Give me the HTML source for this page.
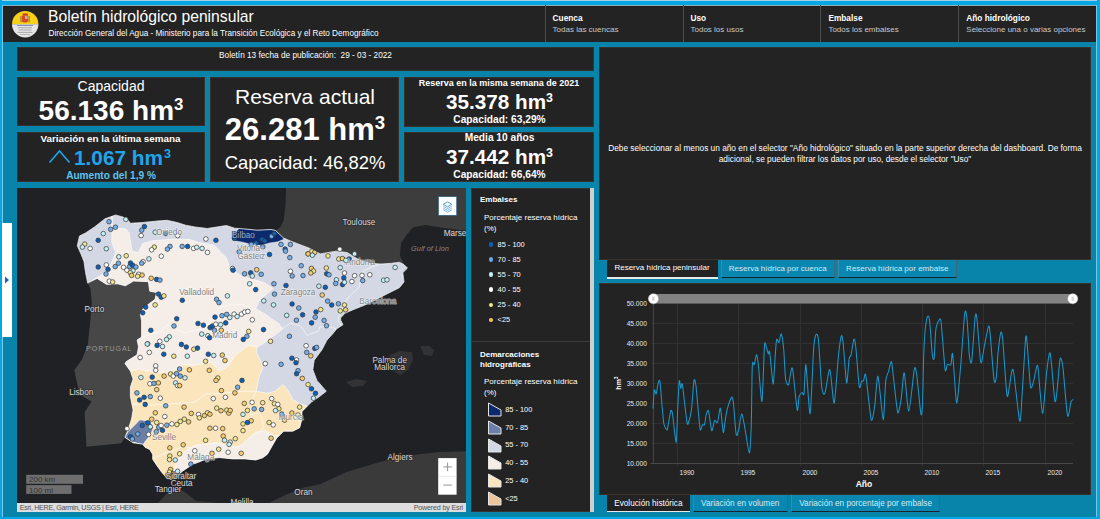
<!DOCTYPE html>
<html><head><meta charset="utf-8">
<style>
*{margin:0;padding:0;box-sizing:border-box}
html,body{width:1100px;height:519px;overflow:hidden;background:#0884ab;font-family:"Liberation Sans",sans-serif;color:#fff}
.abs{position:absolute}
.pan{position:absolute;background:#232323;box-shadow:inset 0 0 0 1px #3b312c}
.t{position:absolute;white-space:nowrap;line-height:1}
sup{font-size:60%;vertical-align:top;position:relative}
</style></head><body>
<div class="abs" style="left:0;top:0;width:1100px;height:5px;background:#04a6e4"></div>
<div class="abs" style="left:0;top:0;width:1100px;height:1px;background:#a6d2e3"></div>
<div class="abs" style="left:0;top:0;width:2px;height:519px;background:#04a6e4"></div>
<div class="abs" style="left:2px;top:5px;width:1px;height:514px;background:#7cc9e6"></div>
<div class="abs" style="left:1097px;top:0;width:3px;height:519px;background:#04a6e4"></div>
<div class="abs" style="left:1096px;top:5px;width:1px;height:514px;background:#7cc9e6"></div>
<div class="abs" style="left:0;top:517px;width:1100px;height:2px;background:#04a6e4"></div>
<div class="abs" style="left:3px;top:5px;width:1093px;height:37px;background:#232323;box-shadow:inset 0 1px 0 #8fb0bd, inset 0 2px 0 #231a16"></div>
<svg class="abs" style="left:11px;top:11px" width="28" height="28" viewBox="0 0 28 28">
<defs><clipPath id="lc"><circle cx="14.2" cy="13.2" r="13.2"/></clipPath></defs>
<g clip-path="url(#lc)"><rect x="0" y="0" width="28" height="13.2" fill="#f7d117"/><rect x="0" y="13.2" width="28" height="15" fill="#e6e6e6"/>
<rect x="11.5" y="2.4" width="5.5" height="2.2" rx="1" fill="#c0392b"/>
<path d="M10.8 4.5 H17.2 V9.5 Q17.2 11.6 14 11.6 Q10.8 11.6 10.8 9.5 Z" fill="#d9482b"/>
<rect x="14" y="5" width="2.6" height="3" fill="#c9a6b8"/>
<rect x="9.2" y="5" width="1.3" height="6.3" fill="#9a8a3a"/><rect x="17.5" y="5" width="1.3" height="6.3" fill="#9a8a3a"/>
<rect x="6" y="14" width="16" height="0.9" fill="#7a88a8"/><rect x="7" y="16.4" width="14" height="0.8" fill="#999"/><rect x="7.5" y="18.6" width="13" height="0.8" fill="#999"/><rect x="6.5" y="20.9" width="15" height="0.8" fill="#999"/><rect x="9" y="23" width="10" height="0.8" fill="#aaa"/></g>
</svg>
<div class="t" style="left:48px;top:9.4px;font-size:15.7px;color:#fff;font-weight:normal;">Boletín hidrológico peninsular</div>
<div class="t" style="left:48.6px;top:29.85px;font-size:8.2px;color:#fff;font-weight:normal;">Dirección General del Agua - Ministerio para la Transición Ecológica y el Reto Demográfico</div>
<div class="abs" style="left:544.6px;top:5px;width:1px;height:37px;background:#4d4d4d"></div>
<div class="t" style="left:552.6px;top:13.8px;font-size:8.3px;color:#fff;font-weight:bold;">Cuenca</div>
<div class="t" style="left:552.6px;top:26.2px;font-size:8.0px;color:#c8c8c8;font-weight:normal;">Todas las cuencas</div>
<div class="abs" style="left:682.5px;top:5px;width:1px;height:37px;background:#4d4d4d"></div>
<div class="t" style="left:690.5px;top:13.8px;font-size:8.3px;color:#fff;font-weight:bold;">Uso</div>
<div class="t" style="left:690.5px;top:26.2px;font-size:8.0px;color:#c8c8c8;font-weight:normal;">Todos los usos</div>
<div class="abs" style="left:820.4px;top:5px;width:1px;height:37px;background:#4d4d4d"></div>
<div class="t" style="left:828.4000000000001px;top:13.8px;font-size:8.3px;color:#fff;font-weight:bold;">Embalse</div>
<div class="t" style="left:828.4000000000001px;top:26.2px;font-size:8.0px;color:#c8c8c8;font-weight:normal;">Todos los embalses</div>
<div class="abs" style="left:958.3px;top:5px;width:1px;height:37px;background:#4d4d4d"></div>
<div class="t" style="left:966.3000000000001px;top:13.8px;font-size:8.3px;color:#fff;font-weight:bold;">Año hidrológico</div>
<div class="t" style="left:966.3000000000001px;top:26.2px;font-size:8.0px;color:#c8c8c8;font-weight:normal;">Seleccione una o varias opciones</div>
<div class="pan" style="left:17px;top:47px;width:577px;height:24px"></div>
<div class="t" style="left:305.5px;top:52.1px;font-size:8.25px;color:#fff;font-weight:normal;transform:translateX(-50%);">Boletín 13 fecha de publicación:&nbsp; 29 - 03 - 2022</div>
<div class="pan" style="left:17px;top:77px;width:188px;height:49px"></div>
<div class="pan" style="left:17px;top:132px;width:188px;height:50px"></div>
<div class="pan" style="left:210px;top:77px;width:189px;height:105px"></div>
<div class="pan" style="left:404px;top:77px;width:190px;height:50px"></div>
<div class="pan" style="left:404px;top:132px;width:190px;height:50px"></div>
<div class="t" style="left:111px;top:78.65px;font-size:14px;color:#fff;font-weight:normal;transform:translateX(-50%);">Capacidad</div>
<div class="t" style="left:111px;top:96.5px;font-size:28px;color:#fff;font-weight:bold;transform:translateX(-50%);">56.136 hm<sup>3</sup></div>
<div class="t" style="left:110.5px;top:133.8px;font-size:9.85px;color:#fff;font-weight:bold;transform:translateX(-50%);">Variación en la última semana</div>
<svg class="abs" style="left:48px;top:149px" width="24" height="15"><path d="M1.5 13.5 L11.5 2 L21.5 13.5" fill="none" stroke="#1ea5ec" stroke-width="1.6"/></svg>
<div class="t" style="left:74px;top:147.8px;font-size:20.8px;color:#1ea5ec;font-weight:bold;">1.067 hm<sup style="margin-left:1px">3</sup></div>
<div class="t" style="left:111px;top:170.6px;font-size:10.1px;color:#5cc3f0;font-weight:bold;transform:translateX(-50%);">Aumento del 1,9 %</div>
<div class="t" style="left:305px;top:85.5px;font-size:21px;color:#fff;font-weight:normal;transform:translateX(-50%);">Reserva actual</div>
<div class="t" style="left:305px;top:113.6px;font-size:31px;color:#fff;font-weight:bold;transform:translateX(-50%);">26.281 hm<sup>3</sup></div>
<div class="t" style="left:305px;top:153.5px;font-size:18.4px;color:#fff;font-weight:normal;transform:translateX(-50%);">Capacidad: 46,82%</div>
<div class="t" style="left:499px;top:78.9px;font-size:9px;color:#fff;font-weight:bold;transform:translateX(-50%);">Reserva en la misma semana de 2021</div>
<div class="t" style="left:499.5px;top:91.5px;font-size:20.7px;color:#fff;font-weight:bold;transform:translateX(-50%);">35.378 hm<sup>3</sup></div>
<div class="t" style="left:499.5px;top:114.7px;font-size:10.2px;color:#fff;font-weight:bold;transform:translateX(-50%);">Capacidad: 63,29%</div>
<div class="t" style="left:499.5px;top:133.2px;font-size:10.2px;color:#fff;font-weight:bold;transform:translateX(-50%);">Media 10 años</div>
<div class="t" style="left:499.5px;top:147.3px;font-size:20.7px;color:#fff;font-weight:bold;transform:translateX(-50%);">37.442 hm<sup>3</sup></div>
<div class="t" style="left:499.5px;top:170px;font-size:10.2px;color:#fff;font-weight:bold;transform:translateX(-50%);">Capacidad: 66,64%</div>
<div class="pan" style="left:599px;top:47px;width:492px;height:213px"></div>
<div class="t" style="left:845px;top:143.5px;font-size:8.3px;color:#fff;font-weight:normal;transform:translateX(-50%);">Debe seleccionar al menos un año en el selector "Año hidrológico" situado en la parte superior derecha del dashboard. De forma</div>
<div class="t" style="left:845px;top:155.3px;font-size:8.3px;color:#fff;font-weight:normal;transform:translateX(-50%);">adicional, se pueden filtrar los datos por uso, desde el selector "Uso"</div>
<div class="abs" style="left:607px;top:260px;width:111px;height:17px;background:#232323"></div>
<div class="abs" style="left:607px;top:277px;width:111px;height:1.5px;background:#e8e8e8"></div>
<div class="t" style="left:662px;top:264px;font-size:8.0px;color:#fff;font-weight:normal;transform:translateX(-50%);">Reserva hídrica peninsular</div>
<div class="abs" style="left:721px;top:260px;width:113.5px;height:18px;background:#0a87b0;border-right:1px solid #3d6a78;border-bottom:1.3px solid #1b2327;border-left:1px solid #3d8aa3"></div>
<div class="t" style="left:777.75px;top:264.8px;font-size:8.0px;color:#d3ebf2;font-weight:normal;transform:translateX(-50%);">Reserva hídrica por cuenca</div>
<div class="abs" style="left:837.5px;top:260px;width:119.5px;height:18px;background:#0a87b0;border-right:1px solid #3d6a78;border-bottom:1.3px solid #1b2327;border-left:1px solid #3d8aa3"></div>
<div class="t" style="left:897.25px;top:264.8px;font-size:8.0px;color:#d3ebf2;font-weight:normal;transform:translateX(-50%);">Reserva hídrica por embalse</div>
<div class="pan" style="left:599px;top:283px;width:492px;height:212px"></div>
<div class="abs" style="left:607px;top:495px;width:83px;height:15.5px;background:#232323"></div>
<div class="abs" style="left:607px;top:510.5px;width:83px;height:1.5px;background:#e8e8e8"></div>
<div class="t" style="left:648.4px;top:499.5px;font-size:8.2px;color:#fff;font-weight:normal;transform:translateX(-50%);">Evolución histórica</div>
<div class="abs" style="left:692.6px;top:495px;width:95.19999999999993px;height:17px;background:#0a87b0;border-right:1px solid #3d6a78;border-bottom:1.3px solid #1b2327;border-left:1px solid #3d8aa3"></div>
<div class="t" style="left:740.2px;top:500px;font-size:8.2px;color:#d3ebf2;font-weight:normal;transform:translateX(-50%);">Variación en volumen</div>
<div class="abs" style="left:790.8px;top:495px;width:149.70000000000005px;height:17px;background:#0a87b0;border-right:1px solid #3d6a78;border-bottom:1.3px solid #1b2327;border-left:1px solid #3d8aa3"></div>
<div class="t" style="left:865.65px;top:500px;font-size:8.2px;color:#d3ebf2;font-weight:normal;transform:translateX(-50%);">Variación en porcentaje por embalse</div>
<svg class="abs" style="left:599px;top:283px" width="492" height="212" viewBox="599 283 492 212"><line x1="650.5" y1="303.5" x2="1073" y2="303.5" stroke="#313131" stroke-width="1"/><text x="646.8" y="305.9" font-size="6.6" fill="#e8e8e8" text-anchor="end">50.000</text><line x1="650.5" y1="323.5" x2="1073" y2="323.5" stroke="#313131" stroke-width="1"/><text x="646.8" y="325.9" font-size="6.6" fill="#e8e8e8" text-anchor="end">45.000</text><line x1="650.5" y1="343.5" x2="1073" y2="343.5" stroke="#313131" stroke-width="1"/><text x="646.8" y="345.9" font-size="6.6" fill="#e8e8e8" text-anchor="end">40.000</text><line x1="650.5" y1="363.5" x2="1073" y2="363.5" stroke="#313131" stroke-width="1"/><text x="646.8" y="365.9" font-size="6.6" fill="#e8e8e8" text-anchor="end">35.000</text><line x1="650.5" y1="383.5" x2="1073" y2="383.5" stroke="#313131" stroke-width="1"/><text x="646.8" y="385.9" font-size="6.6" fill="#e8e8e8" text-anchor="end">30.000</text><line x1="650.5" y1="403.5" x2="1073" y2="403.5" stroke="#313131" stroke-width="1"/><text x="646.8" y="405.9" font-size="6.6" fill="#e8e8e8" text-anchor="end">25.000</text><line x1="650.5" y1="423.5" x2="1073" y2="423.5" stroke="#313131" stroke-width="1"/><text x="646.8" y="425.9" font-size="6.6" fill="#e8e8e8" text-anchor="end">20.000</text><line x1="650.5" y1="443.5" x2="1073" y2="443.5" stroke="#313131" stroke-width="1"/><text x="646.8" y="445.9" font-size="6.6" fill="#e8e8e8" text-anchor="end">15.000</text><line x1="650.5" y1="463.5" x2="1073" y2="463.5" stroke="#313131" stroke-width="1"/><text x="646.8" y="465.9" font-size="6.6" fill="#e8e8e8" text-anchor="end">10.000</text><line x1="677.5" y1="303" x2="677.5" y2="466" stroke="#313131" stroke-width="1"/><text x="686.9" y="475" font-size="6.7" fill="#e8e8e8" text-anchor="middle">1990</text><line x1="738.5" y1="303" x2="738.5" y2="466" stroke="#313131" stroke-width="1"/><text x="747.9" y="475" font-size="6.7" fill="#e8e8e8" text-anchor="middle">1995</text><line x1="800.5" y1="303" x2="800.5" y2="466" stroke="#313131" stroke-width="1"/><text x="809.9" y="475" font-size="6.7" fill="#e8e8e8" text-anchor="middle">2000</text><line x1="861.5" y1="303" x2="861.5" y2="466" stroke="#313131" stroke-width="1"/><text x="870.9" y="475" font-size="6.7" fill="#e8e8e8" text-anchor="middle">2005</text><line x1="922.5" y1="303" x2="922.5" y2="466" stroke="#313131" stroke-width="1"/><text x="931.9" y="475" font-size="6.7" fill="#e8e8e8" text-anchor="middle">2010</text><line x1="983.5" y1="303" x2="983.5" y2="466" stroke="#313131" stroke-width="1"/><text x="992.9" y="475" font-size="6.7" fill="#e8e8e8" text-anchor="middle">2015</text><line x1="1045.5" y1="303" x2="1045.5" y2="466" stroke="#313131" stroke-width="1"/><text x="1054.9" y="475" font-size="6.7" fill="#e8e8e8" text-anchor="middle">2020</text><line x1="653.4" y1="303" x2="653.4" y2="463.5" stroke="#484848" stroke-width="1"/><line x1="650.5" y1="463.5" x2="1073" y2="463.5" stroke="#484848" stroke-width="1"/><text x="864" y="487" font-size="8.5" font-weight="bold" fill="#fff" text-anchor="middle">Año</text><text transform="translate(620.6,383) rotate(-90)" font-size="7" font-weight="bold" fill="#fff" text-anchor="middle">hm<tspan dy="-3" font-size="5">3</tspan></text><rect x="653" y="294" width="420" height="9.5" fill="#828282"/><circle cx="653.4" cy="298.8" r="5" fill="#fff" stroke="#ccc" stroke-width="0.5"/><rect x="652.1" y="296.6" width="2.6" height="4.2" fill="#d6d6d6"/><circle cx="1072.8" cy="298.8" r="5" fill="#fff" stroke="#ccc" stroke-width="0.5"/><rect x="1071.5" y="296.6" width="2.6" height="4.2" fill="#d6d6d6"/><path d="M653.0,408.5 C653.2,406.3 653.9,391.8 654.3,390.0 C654.7,388.2 655.7,394.9 656.2,393.9 C656.7,392.9 658.0,383.0 658.5,381.6 C659.0,380.2 659.5,379.1 660.0,382.3 C660.5,385.5 661.8,403.5 662.3,408.5 C662.8,413.5 663.3,421.4 663.9,424.0 C664.5,426.6 666.4,430.1 667.0,430.0 C667.6,429.9 668.0,425.3 668.5,423.0 C669.0,420.7 670.3,411.9 670.8,410.8 C671.3,409.7 671.9,410.2 672.5,414.0 C673.1,417.8 675.6,443.1 676.2,442.4 C676.8,441.7 677.3,415.9 677.7,408.5 C678.1,401.1 678.9,383.2 679.3,380.8 C679.7,378.4 680.4,388.0 680.8,388.5 C681.2,389.0 681.7,380.5 682.4,384.6 C683.1,388.7 686.2,418.0 687.0,422.4 C687.8,426.8 688.4,422.7 689.0,421.0 C689.6,419.3 691.0,413.3 691.6,408.5 C692.2,403.7 693.4,383.5 693.9,380.8 C694.4,378.1 695.3,380.3 696.0,386.0 C696.7,391.7 699.2,424.0 700.0,428.6 C700.8,433.2 701.9,425.2 702.4,424.7 C702.9,424.2 704.0,425.9 704.5,424.7 C705.0,423.5 705.7,416.4 706.2,414.7 C706.7,413.0 707.8,408.9 708.5,410.8 C709.2,412.7 711.0,429.5 711.7,430.7 C712.4,431.9 713.9,421.5 714.6,420.5 C715.3,419.5 716.8,423.9 717.5,422.4 C718.2,420.9 719.7,407.0 720.4,408.2 C721.1,409.4 722.7,431.6 723.3,432.6 C723.9,433.6 725.2,419.5 725.8,416.2 C726.4,412.9 727.8,407.0 728.5,404.7 C729.2,402.4 731.4,397.1 732.0,397.0 C732.6,396.9 733.0,399.2 733.5,403.7 C734.0,408.2 735.6,431.4 736.2,434.5 C736.8,437.6 738.1,432.2 738.7,429.7 C739.3,427.2 740.9,414.4 741.6,413.9 C742.3,413.4 743.6,421.1 744.5,425.8 C745.4,430.5 748.5,452.7 749.3,452.9 C750.1,453.1 750.8,438.3 751.2,427.8 C751.6,417.3 751.9,373.2 752.3,365.6 C752.7,358.0 753.7,366.0 754.2,364.7 C754.7,363.4 756.2,354.2 756.7,354.7 C757.2,355.2 758.1,362.9 758.7,368.5 C759.3,374.1 761.3,404.1 762.0,401.3 C762.7,398.5 764.0,351.9 764.5,345.4 C765.0,338.9 765.9,346.3 766.4,347.3 C766.9,348.3 767.9,353.4 768.3,354.0 C768.7,354.6 769.1,348.6 769.7,352.2 C770.3,355.8 772.5,383.2 773.1,384.0 C773.7,384.8 774.6,364.2 775.0,358.9 C775.4,353.6 776.1,341.6 776.6,339.6 C777.1,337.6 778.3,343.2 778.9,342.5 C779.5,341.8 780.6,333.1 781.2,333.9 C781.8,334.7 783.2,343.9 783.7,349.3 C784.2,354.7 785.0,374.7 785.6,379.0 C786.2,383.3 787.9,385.7 788.5,384.9 C789.1,384.1 790.3,374.2 790.8,372.4 C791.3,370.6 791.9,365.0 792.7,369.5 C793.5,374.0 796.4,406.8 797.2,410.0 C798.0,413.2 798.5,398.6 799.1,396.5 C799.7,394.4 801.4,392.9 802.0,392.6 C802.6,392.3 803.5,396.9 804.0,393.6 C804.5,390.3 805.2,362.3 805.9,364.7 C806.6,367.1 809.2,415.6 810.1,413.8 C811.0,412.0 812.9,358.8 813.6,349.3 C814.3,339.8 815.3,336.0 815.9,334.8 C816.5,333.6 817.7,333.4 818.4,339.6 C819.1,345.8 820.9,380.3 821.7,386.8 C822.5,393.3 823.8,395.7 824.8,393.6 C825.8,391.5 828.7,368.3 829.8,369.5 C830.9,370.7 833.2,404.9 834.2,403.2 C835.2,401.5 837.6,363.1 838.5,355.0 C839.4,346.9 840.8,337.1 841.4,335.8 C842.0,334.5 842.7,338.8 843.3,344.5 C843.9,350.2 845.9,381.3 846.6,383.0 C847.3,384.7 848.6,362.3 849.1,358.9 C849.6,355.5 850.4,357.4 851.0,355.0 C851.6,352.6 853.3,340.1 853.9,339.2 C854.5,338.3 855.2,341.6 855.8,347.3 C856.4,353.0 858.6,382.8 859.3,386.8 C860.0,390.8 861.1,381.7 861.6,381.0 C862.1,380.3 863.0,381.7 863.5,381.0 C864.0,380.3 864.9,370.7 865.8,375.3 C866.7,379.9 870.1,415.9 871.2,419.6 C872.3,423.3 873.9,411.3 874.7,406.1 C875.5,400.9 877.0,374.6 878.0,376.2 C879.0,377.8 882.3,419.0 883.2,419.6 C884.1,420.2 885.1,386.8 885.7,381.0 C886.3,375.2 887.9,373.7 888.6,371.4 C889.3,369.1 890.8,360.1 891.5,361.8 C892.2,363.5 893.6,379.8 894.4,385.9 C895.2,392.0 897.0,411.3 897.8,412.9 C898.6,414.5 900.3,404.2 901.1,399.4 C901.9,394.6 903.3,371.4 904.2,372.8 C905.1,374.2 907.6,411.4 908.8,411.0 C910.0,410.6 913.4,373.8 914.3,369.4 C915.2,365.0 915.8,368.7 916.6,374.0 C917.4,379.3 920.1,409.4 920.8,413.3 C921.5,417.2 922.0,413.6 922.4,406.4 C922.8,399.2 923.4,362.6 923.8,353.2 C924.2,343.8 924.9,332.1 925.4,327.7 C925.9,323.3 927.2,317.0 927.7,316.2 C928.2,315.4 929.0,316.1 929.6,320.8 C930.2,325.5 931.8,351.1 932.4,355.5 C933.0,359.9 933.8,360.9 934.2,357.8 C934.6,354.7 935.2,334.6 935.8,330.0 C936.4,325.4 938.7,320.5 939.3,319.7 C939.9,318.9 940.5,317.1 941.2,323.1 C941.9,329.1 944.4,364.4 945.1,369.4 C945.8,374.4 946.7,365.3 947.4,364.7 C948.1,364.1 950.3,365.9 950.9,364.7 C951.5,363.5 952.0,349.7 952.7,354.3 C953.4,358.9 955.7,401.4 956.6,402.9 C957.5,404.4 959.6,377.7 960.6,367.0 C961.6,356.3 963.9,319.2 964.7,313.4 C965.5,307.6 966.4,313.4 967.0,318.5 C967.6,323.6 968.8,350.4 969.4,355.5 C970.0,360.6 971.0,365.9 971.7,361.3 C972.4,356.7 974.5,322.4 975.1,317.3 C975.7,312.2 976.2,313.1 976.9,318.5 C977.6,323.9 979.9,359.1 980.8,362.4 C981.7,365.7 983.4,350.6 984.3,346.3 C985.2,342.0 987.7,328.3 988.4,326.6 C989.1,324.9 989.3,326.0 990.0,332.4 C990.7,338.8 993.2,374.4 994.0,379.8 C994.8,385.2 995.8,380.8 996.3,377.5 C996.8,374.2 997.5,357.4 998.1,352.0 C998.7,346.6 1000.3,333.8 1000.9,332.4 C1001.5,331.0 1002.1,333.0 1002.8,340.5 C1003.5,348.0 1006.1,389.1 1006.9,394.8 C1007.7,400.5 1008.6,390.7 1009.2,387.8 C1009.8,384.9 1011.4,372.2 1012.0,370.5 C1012.6,368.8 1013.0,368.1 1013.9,374.0 C1014.8,379.9 1018.5,415.8 1019.4,420.0 C1020.3,424.2 1020.6,418.2 1021.3,408.7 C1022.0,399.2 1024.7,348.6 1025.4,340.5 C1026.1,332.4 1026.4,336.1 1027.0,341.6 C1027.6,347.1 1029.7,382.1 1030.5,386.7 C1031.3,391.3 1033.4,381.6 1034.0,379.8 C1034.6,378.0 1035.1,373.2 1035.6,371.7 C1036.1,370.2 1037.1,362.0 1037.9,367.0 C1038.7,372.0 1041.4,412.7 1042.5,413.3 C1043.6,413.9 1045.8,378.9 1046.7,371.7 C1047.6,364.5 1049.2,349.7 1050.2,353.2 C1051.2,356.7 1054.0,396.2 1054.8,400.6 C1055.6,405.0 1056.5,395.2 1057.1,390.2 C1057.7,385.2 1059.4,361.8 1060.1,359.0 C1060.8,356.2 1062.0,360.2 1062.9,367.0 C1063.8,373.8 1066.5,411.4 1067.5,415.6 C1068.5,419.8 1070.3,403.7 1071.0,401.8 C1071.7,399.9 1073.0,399.7 1073.3,399.4" fill="none" stroke="#1897cc" stroke-width="1.05" stroke-linejoin="round"/></svg>
<div class="abs" style="left:17px;top:188px;width:449px;height:324px;background:#202124;overflow:hidden"><svg width="449" height="324" viewBox="17 188 449 324" style="position:absolute;left:0;top:0"><defs><clipPath id="sp"><polygon points="77.3,245.8 79.5,236.0 85.5,233.0 94.5,227.0 105.0,218.8 115.6,215.0 126.1,218.0 130.6,223.3 142.7,222.5 157.7,221.0 167.0,220.3 177.0,222.5 185.5,225.2 195.0,227.0 207.3,228.5 217.0,227.0 226.4,225.5 234.5,228.2 243.9,228.9 257.4,230.2 270.9,229.5 275.4,230.4 283.7,238.1 292.1,241.7 301.6,245.3 310.0,248.5 320.2,253.9 336.4,251.2 347.2,252.5 358.0,259.3 370.1,263.3 380.9,264.0 391.7,263.3 399.4,262.3 404.0,264.6 407.5,268.1 402.8,272.7 404.0,282.0 399.4,287.7 387.8,293.5 376.2,299.3 364.7,305.1 353.1,309.7 345.0,313.2 340.5,318.0 340.8,320.4 343.0,324.7 336.6,328.9 332.4,334.2 327.0,340.0 321.8,350.0 314.2,360.2 312.8,369.7 316.9,380.4 326.3,391.2 319.5,396.6 311.5,402.0 307.4,406.0 302.0,411.6 301.5,420.8 299.7,427.7 292.8,431.2 283.6,431.2 276.6,438.2 272.0,446.2 267.4,454.3 262.7,457.8 255.8,460.0 245.0,458.9 232.9,458.9 219.4,457.6 205.9,458.9 198.9,462.1 193.1,464.1 187.3,467.9 181.6,471.8 176.8,477.5 171.0,479.5 166.2,477.5 161.4,471.8 156.5,465.0 152.7,459.2 152.7,454.4 149.8,449.6 145.0,447.2 142.5,444.1 133.1,442.8 125.0,437.4 128.0,430.0 131.6,418.9 133.1,410.0 130.4,396.6 130.4,387.2 133.1,379.1 130.4,371.0 125.0,363.6 126.3,361.6 137.1,354.8 138.5,346.7 137.1,340.0 141.6,337.0 141.6,320.8 140.3,314.1 143.0,308.7 149.7,303.3 155.1,299.3 156.5,292.5 149.7,291.2 148.4,281.7 133.5,281.1 125.4,285.8 117.4,283.8 106.6,284.4 97.1,278.4 87.7,283.1 87.0,279.7 85.5,272.2 84.0,261.6 81.0,254.1"/></clipPath></defs><rect x="17" y="188" width="449" height="324" fill="#202124"/><polygon points="286.1,186.0 470.0,186.0 470.0,231.0 460.0,230.0 440.5,227.6 425.4,225.0 412.9,227.6 406.5,235.0 401.1,243.1 399.8,255.2 404.0,264.6 399.4,262.3 391.7,263.3 380.9,264.0 370.1,263.3 358.0,259.3 347.2,252.5 336.4,251.2 320.2,253.9 310.0,248.5 301.6,245.3 292.1,241.7 283.7,238.1 275.4,230.4 280.1,227.4 283.7,220.2 285.5,205.9" fill="#3d3d3e"/><polygon points="150.0,520.0 158.0,503.0 167.8,492.4 177.6,487.5 187.5,494.0 196.0,501.0 230.0,504.0 265.0,505.0 287.3,494.0 303.7,487.5 320.0,484.2 346.4,472.0 381.5,461.5 416.6,454.5 440.0,452.0 470.0,451.0 470.0,520.0" fill="#3a3a3b"/><polygon points="87.7,283.1 97.1,278.4 106.6,284.4 117.4,283.8 125.4,285.8 133.5,281.1 148.4,281.7 149.7,291.2 156.5,292.5 155.1,299.3 149.7,303.3 143.0,308.7 140.3,314.1 141.6,320.8 141.6,337.0 137.1,340.0 138.5,346.7 137.1,354.8 126.3,361.6 125.0,363.6 130.4,371.0 133.1,379.1 130.4,387.2 130.4,396.6 133.1,410.0 131.6,418.9 128.0,430.0 125.0,437.4 121.2,443.2 86.4,446.7 84.7,412.0 91.6,401.5 79.5,394.6 74.3,370.3 81.7,360.0 87.7,345.0 90.4,320.8 91.7,302.0 90.4,288.5" fill="#474747"/><polygon points="390.0,355.0 400.0,351.0 412.0,352.0 413.0,360.0 408.0,370.0 400.0,375.6 392.0,370.0 388.5,362.0" fill="#333335"/><polygon points="420.0,346.0 429.0,345.8 434.0,350.0 432.0,356.0 424.0,355.0" fill="#333335"/><polygon points="346.0,382.0 356.0,379.0 367.0,381.0 363.0,386.0 352.0,387.0" fill="#333335"/><g clip-path="url(#sp)"><polygon points="77.3,245.8 79.5,236.0 85.5,233.0 94.5,227.0 105.0,218.8 115.6,215.0 126.1,218.0 130.6,223.3 142.7,222.5 157.7,221.0 167.0,220.3 177.0,222.5 185.5,225.2 195.0,227.0 207.3,228.5 217.0,227.0 226.4,225.5 234.5,228.2 243.9,228.9 257.4,230.2 270.9,229.5 275.4,230.4 283.7,238.1 292.1,241.7 301.6,245.3 310.0,248.5 320.2,253.9 336.4,251.2 347.2,252.5 358.0,259.3 370.1,263.3 380.9,264.0 391.7,263.3 399.4,262.3 404.0,264.6 407.5,268.1 402.8,272.7 404.0,282.0 399.4,287.7 387.8,293.5 376.2,299.3 364.7,305.1 353.1,309.7 345.0,313.2 340.5,318.0 340.8,320.4 343.0,324.7 336.6,328.9 332.4,334.2 327.0,340.0 321.8,350.0 314.2,360.2 312.8,369.7 316.9,380.4 326.3,391.2 319.5,396.6 311.5,402.0 307.4,406.0 302.0,411.6 301.5,420.8 299.7,427.7 292.8,431.2 283.6,431.2 276.6,438.2 272.0,446.2 267.4,454.3 262.7,457.8 255.8,460.0 245.0,458.9 232.9,458.9 219.4,457.6 205.9,458.9 198.9,462.1 193.1,464.1 187.3,467.9 181.6,471.8 176.8,477.5 171.0,479.5 166.2,477.5 161.4,471.8 156.5,465.0 152.7,459.2 152.7,454.4 149.8,449.6 145.0,447.2 142.5,444.1 133.1,442.8 125.0,437.4 128.0,430.0 131.6,418.9 133.1,410.0 130.4,396.6 130.4,387.2 133.1,379.1 130.4,371.0 125.0,363.6 126.3,361.6 137.1,354.8 138.5,346.7 137.1,340.0 141.6,337.0 141.6,320.8 140.3,314.1 143.0,308.7 149.7,303.3 155.1,299.3 156.5,292.5 149.7,291.2 148.4,281.7 133.5,281.1 125.4,285.8 117.4,283.8 106.6,284.4 97.1,278.4 87.7,283.1 87.0,279.7 85.5,272.2 84.0,261.6 81.0,254.1" fill="#d3d8e4"/><polygon points="112.1,215.0 112.1,229.5 118.0,228.0 126.0,229.0 129.1,233.0 132.1,251.1 138.2,252.6 142.7,243.6 153.2,240.6 175.0,239.0 190.0,239.6 198.1,242.3 206.2,243.7 214.3,245.0 221.0,252.4 226.4,257.8 229.1,265.9 234.5,271.3 242.6,276.7 256.0,280.0 265.1,283.1 273.2,288.5 265.1,295.2 258.4,302.0 255.7,308.7 265.1,314.1 270.5,318.1 278.6,323.5 282.6,328.9 275.9,334.3 270.5,338.4 261.1,345.0 257.5,346.7 248.1,345.4 245.0,348.1 235.6,354.8 227.5,367.0 219.4,371.0 211.3,362.2 200.5,364.3 192.4,365.6 183.0,364.3 176.2,369.0 165.4,372.4 154.7,372.4 138.5,369.0 130.4,371.0 125.0,363.6 110.0,363.0 110.0,290.0 88.5,290.0 88.5,284.2 93.0,280.0 100.0,276.0 107.0,270.0 112.0,262.0 115.6,252.6 111.8,242.0" fill="#f4ede8" stroke="#fff" stroke-width="0.8" stroke-opacity="0.75"/><polygon points="125.0,363.6 130.4,371.0 138.5,369.0 154.7,372.4 165.4,372.4 176.2,369.0 183.0,364.3 192.4,365.6 200.5,364.3 211.3,362.2 219.4,371.0 227.5,367.0 235.6,354.8 245.0,348.1 248.1,345.4 257.5,346.7 256.2,352.1 260.2,360.2 262.9,367.0 258.9,377.8 256.2,391.2 267.0,393.3 275.1,391.2 283.1,384.5 288.5,391.2 292.6,399.3 299.3,403.4 307.4,406.1 315.0,406.0 310.0,440.0 274.3,435.8 269.7,433.5 265.1,430.6 255.8,432.4 248.9,438.2 241.9,445.1 235.0,447.4 227.5,445.4 216.7,442.8 205.9,444.1 195.1,445.4 185.7,450.8 176.2,461.6 173.9,476.6 170.0,490.0 120.0,490.0 110.0,363.0" fill="#fbe5bd" stroke="#fff" stroke-width="0.8" stroke-opacity="0.75"/><polygon points="173.9,476.6 176.2,461.6 185.7,450.8 195.1,445.4 205.9,444.1 216.7,442.8 227.5,445.4 235.0,447.4 241.9,445.1 248.9,438.2 255.8,432.4 265.1,430.6 269.7,433.5 274.3,435.8 285.0,436.0 280.0,470.0 175.0,490.0" fill="#f4ede8" stroke="#fff" stroke-width="0.8" stroke-opacity="0.75"/><polygon points="232.4,238.1 241.9,224.0 253.9,224.0 265.8,228.0 273.0,226.0 282.5,230.0 283.7,239.3 277.8,241.7 269.4,242.9 261.0,245.3 250.3,244.1 240.7,241.7 232.4,240.5" fill="#0b2a6e" stroke="#fff" stroke-width="0.6" stroke-opacity="0.6"/><polygon points="127.7,432.0 135.8,423.9 139.8,419.8 150.6,421.2 153.3,427.9 150.6,434.7 145.2,441.4 142.5,445.4 135.8,442.8 129.0,440.7 124.0,438.0" fill="#6b80a8" stroke="#fff" stroke-width="0.6"/><polyline points="141.6,337.0 160.5,331.6 167.2,324.9 184.8,333.0 192.9,330.3 205.0,328.9 212.0,318.0 219.3,307.4 232.8,304.0 242.2,304.7 255.7,308.7" fill="none" stroke="#fff" stroke-width="0.8" stroke-opacity="0.75"/><polyline points="282.6,328.9 290.0,323.1 300.6,325.7 306.9,335.3 318.6,331.0 319.7,326.8 332.4,327.3 336.6,328.9" fill="none" stroke="#fff" stroke-width="0.8" stroke-opacity="0.75"/><polyline points="378.6,264.6 363.5,270.4 361.2,278.5 358.9,287.7 350.8,294.7 346.2,300.5 342.7,308.6 339.2,315.5 337.7,320.4 341.9,325.7" fill="none" stroke="#fff" stroke-width="0.8" stroke-opacity="0.75"/><polyline points="131.0,404.0 150.0,405.0 178.9,403.4 195.1,402.0 205.9,393.9 216.7,393.9 227.5,392.6 245.0,391.2 256.2,391.2" fill="none" stroke="#fff" stroke-width="0.8" stroke-opacity="0.75"/><polyline points="256.2,391.2 252.0,400.0 250.0,415.0 259.9,412.7 262.7,420.8 263.3,427.7 260.4,431.0" fill="none" stroke="#fff" stroke-width="0.8" stroke-opacity="0.75"/><polyline points="152.7,458.3 164.2,453.5 176.2,449.5 183.5,446.0 190.0,448.0" fill="none" stroke="#fff" stroke-width="0.8" stroke-opacity="0.75"/></g><polygon points="77.3,245.8 79.5,236.0 85.5,233.0 94.5,227.0 105.0,218.8 115.6,215.0 126.1,218.0 130.6,223.3 142.7,222.5 157.7,221.0 167.0,220.3 177.0,222.5 185.5,225.2 195.0,227.0 207.3,228.5 217.0,227.0 226.4,225.5 234.5,228.2 243.9,228.9 257.4,230.2 270.9,229.5 275.4,230.4 283.7,238.1 292.1,241.7 301.6,245.3 310.0,248.5 320.2,253.9 336.4,251.2 347.2,252.5 358.0,259.3 370.1,263.3 380.9,264.0 391.7,263.3 399.4,262.3 404.0,264.6 407.5,268.1 402.8,272.7 404.0,282.0 399.4,287.7 387.8,293.5 376.2,299.3 364.7,305.1 353.1,309.7 345.0,313.2 340.5,318.0 340.8,320.4 343.0,324.7 336.6,328.9 332.4,334.2 327.0,340.0 321.8,350.0 314.2,360.2 312.8,369.7 316.9,380.4 326.3,391.2 319.5,396.6 311.5,402.0 307.4,406.0 302.0,411.6 301.5,420.8 299.7,427.7 292.8,431.2 283.6,431.2 276.6,438.2 272.0,446.2 267.4,454.3 262.7,457.8 255.8,460.0 245.0,458.9 232.9,458.9 219.4,457.6 205.9,458.9 198.9,462.1 193.1,464.1 187.3,467.9 181.6,471.8 176.8,477.5 171.0,479.5 166.2,477.5 161.4,471.8 156.5,465.0 152.7,459.2 152.7,454.4 149.8,449.6 145.0,447.2 142.5,444.1 133.1,442.8 125.0,437.4 128.0,430.0 131.6,418.9 133.1,410.0 130.4,396.6 130.4,387.2 133.1,379.1 130.4,371.0 125.0,363.6 126.3,361.6 137.1,354.8 138.5,346.7 137.1,340.0 141.6,337.0 141.6,320.8 140.3,314.1 143.0,308.7 149.7,303.3 155.1,299.3 156.5,292.5 149.7,291.2 148.4,281.7 133.5,281.1 125.4,285.8 117.4,283.8 106.6,284.4 97.1,278.4 87.7,283.1 87.0,279.7 85.5,272.2 84.0,261.6 81.0,254.1" fill="none" stroke="#fff" stroke-width="0.9" stroke-opacity="0.85"/><circle cx="109.0" cy="221.7" r="2.3" fill="#72aeea" stroke="#333" stroke-width="0.7"/><circle cx="125.8" cy="219.4" r="2.3" fill="#bff0f6" stroke="#333" stroke-width="0.7"/><circle cx="110.7" cy="229.3" r="2.3" fill="#72aeea" stroke="#333" stroke-width="0.7"/><circle cx="115.4" cy="227.2" r="2.3" fill="#72aeea" stroke="#333" stroke-width="0.7"/><circle cx="103.3" cy="233.6" r="2.3" fill="#bff0f6" stroke="#333" stroke-width="0.7"/><circle cx="98.2" cy="240.3" r="2.3" fill="#0b5fb8" stroke="#333" stroke-width="0.7"/><circle cx="84.7" cy="244.1" r="2.3" fill="#f1e68c" stroke="#333" stroke-width="0.7"/><circle cx="82.4" cy="247.1" r="2.3" fill="#bff0f6" stroke="#333" stroke-width="0.7"/><circle cx="90.1" cy="248.4" r="2.3" fill="#ffffff" stroke="#333" stroke-width="0.7"/><circle cx="106.3" cy="248.7" r="2.3" fill="#bff0f6" stroke="#333" stroke-width="0.7"/><circle cx="144.4" cy="226.6" r="2.3" fill="#0b5fb8" stroke="#333" stroke-width="0.7"/><circle cx="141.7" cy="230.2" r="2.3" fill="#72aeea" stroke="#333" stroke-width="0.7"/><circle cx="141.1" cy="235.6" r="2.3" fill="#ffffff" stroke="#333" stroke-width="0.7"/><circle cx="155.2" cy="232.2" r="2.3" fill="#bff0f6" stroke="#333" stroke-width="0.7"/><circle cx="165.6" cy="233.6" r="2.3" fill="#0b5fb8" stroke="#333" stroke-width="0.7"/><circle cx="177.7" cy="235.6" r="2.3" fill="#ffffff" stroke="#333" stroke-width="0.7"/><circle cx="154.3" cy="247.1" r="2.3" fill="#f1e68c" stroke="#333" stroke-width="0.7"/><circle cx="151.6" cy="249.8" r="2.3" fill="#ffffff" stroke="#333" stroke-width="0.7"/><circle cx="170.0" cy="246.4" r="2.3" fill="#72aeea" stroke="#333" stroke-width="0.7"/><circle cx="167.4" cy="249.1" r="2.3" fill="#72aeea" stroke="#333" stroke-width="0.7"/><circle cx="182.2" cy="246.4" r="2.3" fill="#72aeea" stroke="#333" stroke-width="0.7"/><circle cx="187.6" cy="246.4" r="2.3" fill="#0b5fb8" stroke="#333" stroke-width="0.7"/><circle cx="193.6" cy="248.4" r="2.3" fill="#ffffff" stroke="#333" stroke-width="0.7"/><circle cx="161.3" cy="256.2" r="2.3" fill="#ffffff" stroke="#333" stroke-width="0.7"/><circle cx="148.9" cy="258.9" r="2.3" fill="#bff0f6" stroke="#333" stroke-width="0.7"/><circle cx="143.1" cy="261.6" r="2.3" fill="#ffffff" stroke="#333" stroke-width="0.7"/><circle cx="141.7" cy="263.2" r="2.3" fill="#72aeea" stroke="#333" stroke-width="0.7"/><circle cx="126.2" cy="255.8" r="2.3" fill="#f1e68c" stroke="#333" stroke-width="0.7"/><circle cx="118.8" cy="256.8" r="2.3" fill="#bff0f6" stroke="#333" stroke-width="0.7"/><circle cx="118.4" cy="263.2" r="2.3" fill="#72aeea" stroke="#333" stroke-width="0.7"/><circle cx="115.2" cy="266.6" r="2.3" fill="#72aeea" stroke="#333" stroke-width="0.7"/><circle cx="106.3" cy="264.9" r="2.3" fill="#ffffff" stroke="#333" stroke-width="0.7"/><circle cx="98.2" cy="267.0" r="2.3" fill="#0b5fb8" stroke="#333" stroke-width="0.7"/><circle cx="108.0" cy="269.3" r="2.3" fill="#0b5fb8" stroke="#333" stroke-width="0.7"/><circle cx="106.0" cy="274.0" r="2.3" fill="#72aeea" stroke="#333" stroke-width="0.7"/><circle cx="123.5" cy="267.3" r="2.3" fill="#ffffff" stroke="#333" stroke-width="0.7"/><circle cx="126.9" cy="270.2" r="2.3" fill="#ffffff" stroke="#333" stroke-width="0.7"/><circle cx="129.6" cy="266.6" r="2.3" fill="#72aeea" stroke="#333" stroke-width="0.7"/><circle cx="130.5" cy="263.0" r="2.3" fill="#0b5fb8" stroke="#333" stroke-width="0.7"/><circle cx="132.7" cy="265.3" r="2.3" fill="#0b5fb8" stroke="#333" stroke-width="0.7"/><circle cx="135.9" cy="267.0" r="2.3" fill="#72aeea" stroke="#333" stroke-width="0.7"/><circle cx="133.0" cy="270.7" r="2.3" fill="#bff0f6" stroke="#333" stroke-width="0.7"/><circle cx="130.3" cy="272.7" r="2.3" fill="#f1e68c" stroke="#333" stroke-width="0.7"/><circle cx="131.6" cy="275.4" r="2.3" fill="#f3cc70" stroke="#333" stroke-width="0.7"/><circle cx="138.6" cy="274.3" r="2.3" fill="#ffffff" stroke="#333" stroke-width="0.7"/><circle cx="142.1" cy="275.1" r="2.3" fill="#f3cc70" stroke="#333" stroke-width="0.7"/><circle cx="151.2" cy="278.3" r="2.3" fill="#f3cc70" stroke="#333" stroke-width="0.7"/><circle cx="156.6" cy="279.4" r="2.3" fill="#0b5fb8" stroke="#333" stroke-width="0.7"/><circle cx="160.0" cy="280.1" r="2.3" fill="#72aeea" stroke="#333" stroke-width="0.7"/><circle cx="205.9" cy="239.0" r="2.3" fill="#ffffff" stroke="#333" stroke-width="0.7"/><circle cx="215.9" cy="240.3" r="2.3" fill="#0b5fb8" stroke="#333" stroke-width="0.7"/><circle cx="196.7" cy="247.3" r="2.3" fill="#bff0f6" stroke="#333" stroke-width="0.7"/><circle cx="202.1" cy="248.4" r="2.3" fill="#bff0f6" stroke="#333" stroke-width="0.7"/><circle cx="207.5" cy="252.4" r="2.3" fill="#ffffff" stroke="#333" stroke-width="0.7"/><circle cx="234.5" cy="238.3" r="2.3" fill="#0b5fb8" stroke="#333" stroke-width="0.7"/><circle cx="251.3" cy="244.4" r="2.3" fill="#72aeea" stroke="#333" stroke-width="0.7"/><circle cx="256.1" cy="243.0" r="2.3" fill="#0b5fb8" stroke="#333" stroke-width="0.7"/><circle cx="262.1" cy="239.6" r="2.3" fill="#0b5fb8" stroke="#333" stroke-width="0.7"/><circle cx="264.8" cy="241.0" r="2.3" fill="#0b5fb8" stroke="#333" stroke-width="0.7"/><circle cx="262.8" cy="246.8" r="2.3" fill="#72aeea" stroke="#333" stroke-width="0.7"/><circle cx="271.6" cy="236.3" r="2.3" fill="#72aeea" stroke="#333" stroke-width="0.7"/><circle cx="274.3" cy="233.8" r="2.3" fill="#0b5fb8" stroke="#333" stroke-width="0.7"/><circle cx="281.0" cy="244.4" r="2.3" fill="#72aeea" stroke="#333" stroke-width="0.7"/><circle cx="290.4" cy="244.4" r="2.3" fill="#72aeea" stroke="#333" stroke-width="0.7"/><circle cx="285.1" cy="249.1" r="2.3" fill="#0b5fb8" stroke="#333" stroke-width="0.7"/><circle cx="285.5" cy="251.1" r="2.3" fill="#72aeea" stroke="#333" stroke-width="0.7"/><circle cx="239.2" cy="251.8" r="2.3" fill="#72aeea" stroke="#333" stroke-width="0.7"/><circle cx="269.5" cy="254.5" r="2.3" fill="#0b5fb8" stroke="#333" stroke-width="0.7"/><circle cx="289.8" cy="257.6" r="2.3" fill="#72aeea" stroke="#333" stroke-width="0.7"/><circle cx="308.0" cy="253.8" r="2.3" fill="#f1e68c" stroke="#333" stroke-width="0.7"/><circle cx="232.5" cy="268.4" r="2.3" fill="#bff0f6" stroke="#333" stroke-width="0.7"/><circle cx="233.1" cy="270.2" r="2.3" fill="#0b5fb8" stroke="#333" stroke-width="0.7"/><circle cx="244.6" cy="273.8" r="2.3" fill="#72aeea" stroke="#333" stroke-width="0.7"/><circle cx="250.7" cy="272.9" r="2.3" fill="#0b5fb8" stroke="#333" stroke-width="0.7"/><circle cx="252.3" cy="276.0" r="2.3" fill="#bff0f6" stroke="#333" stroke-width="0.7"/><circle cx="256.7" cy="269.7" r="2.3" fill="#f3cc70" stroke="#333" stroke-width="0.7"/><circle cx="261.2" cy="274.3" r="2.3" fill="#72aeea" stroke="#333" stroke-width="0.7"/><circle cx="290.4" cy="271.3" r="2.3" fill="#ffffff" stroke="#333" stroke-width="0.7"/><circle cx="292.2" cy="276.0" r="2.3" fill="#72aeea" stroke="#333" stroke-width="0.7"/><circle cx="303.0" cy="275.6" r="2.3" fill="#72aeea" stroke="#333" stroke-width="0.7"/><circle cx="301.2" cy="265.7" r="2.3" fill="#72aeea" stroke="#333" stroke-width="0.7"/><circle cx="308.1" cy="253.9" r="2.3" fill="#f3cc70" stroke="#333" stroke-width="0.7"/><circle cx="311.9" cy="251.2" r="2.3" fill="#f1e68c" stroke="#333" stroke-width="0.7"/><circle cx="314.6" cy="252.5" r="2.3" fill="#f3cc70" stroke="#333" stroke-width="0.7"/><circle cx="312.4" cy="255.2" r="2.3" fill="#bff0f6" stroke="#333" stroke-width="0.7"/><circle cx="328.0" cy="255.9" r="2.3" fill="#f1e68c" stroke="#333" stroke-width="0.7"/><circle cx="339.8" cy="249.2" r="2.3" fill="#ffffff" stroke="#333" stroke-width="0.7"/><circle cx="354.6" cy="253.9" r="2.3" fill="#bff0f6" stroke="#333" stroke-width="0.7"/><circle cx="338.8" cy="259.0" r="2.3" fill="#f1e68c" stroke="#333" stroke-width="0.7"/><circle cx="342.5" cy="258.6" r="2.3" fill="#f3cc70" stroke="#333" stroke-width="0.7"/><circle cx="349.2" cy="259.0" r="2.3" fill="#0b5fb8" stroke="#333" stroke-width="0.7"/><circle cx="345.8" cy="260.3" r="2.3" fill="#bff0f6" stroke="#333" stroke-width="0.7"/><circle cx="311.5" cy="268.4" r="2.3" fill="#f3cc70" stroke="#333" stroke-width="0.7"/><circle cx="313.5" cy="271.1" r="2.3" fill="#f1e68c" stroke="#333" stroke-width="0.7"/><circle cx="310.8" cy="273.0" r="2.3" fill="#f3cc70" stroke="#333" stroke-width="0.7"/><circle cx="326.3" cy="268.0" r="2.3" fill="#f1e68c" stroke="#333" stroke-width="0.7"/><circle cx="326.7" cy="273.8" r="2.3" fill="#0b5fb8" stroke="#333" stroke-width="0.7"/><circle cx="329.0" cy="274.8" r="2.3" fill="#72aeea" stroke="#333" stroke-width="0.7"/><circle cx="340.2" cy="267.6" r="2.3" fill="#bff0f6" stroke="#333" stroke-width="0.7"/><circle cx="344.5" cy="273.0" r="2.3" fill="#ffffff" stroke="#333" stroke-width="0.7"/><circle cx="343.8" cy="277.9" r="2.3" fill="#0b5fb8" stroke="#333" stroke-width="0.7"/><circle cx="336.4" cy="279.8" r="2.3" fill="#bff0f6" stroke="#333" stroke-width="0.7"/><circle cx="335.7" cy="283.5" r="2.3" fill="#72aeea" stroke="#333" stroke-width="0.7"/><circle cx="342.5" cy="284.6" r="2.3" fill="#0b5fb8" stroke="#333" stroke-width="0.7"/><circle cx="344.5" cy="282.2" r="2.3" fill="#bff0f6" stroke="#333" stroke-width="0.7"/><circle cx="351.9" cy="281.5" r="2.3" fill="#ffffff" stroke="#333" stroke-width="0.7"/><circle cx="354.6" cy="275.7" r="2.3" fill="#ffffff" stroke="#333" stroke-width="0.7"/><circle cx="362.0" cy="275.4" r="2.3" fill="#ffffff" stroke="#333" stroke-width="0.7"/><circle cx="369.8" cy="274.8" r="2.3" fill="#ffffff" stroke="#333" stroke-width="0.7"/><circle cx="362.7" cy="280.6" r="2.3" fill="#72aeea" stroke="#333" stroke-width="0.7"/><circle cx="383.6" cy="280.2" r="2.3" fill="#bff0f6" stroke="#333" stroke-width="0.7"/><circle cx="387.0" cy="279.8" r="2.3" fill="#bff0f6" stroke="#333" stroke-width="0.7"/><circle cx="395.1" cy="267.4" r="2.3" fill="#bff0f6" stroke="#333" stroke-width="0.7"/><circle cx="318.9" cy="286.2" r="2.3" fill="#bff0f6" stroke="#333" stroke-width="0.7"/><circle cx="325.3" cy="287.3" r="2.3" fill="#0b5fb8" stroke="#333" stroke-width="0.7"/><circle cx="322.2" cy="295.0" r="2.3" fill="#f3cc70" stroke="#333" stroke-width="0.7"/><circle cx="327.6" cy="301.1" r="2.3" fill="#72aeea" stroke="#333" stroke-width="0.7"/><circle cx="338.4" cy="303.8" r="2.3" fill="#72aeea" stroke="#333" stroke-width="0.7"/><circle cx="331.7" cy="305.0" r="2.3" fill="#0b5fb8" stroke="#333" stroke-width="0.7"/><circle cx="344.5" cy="305.0" r="2.3" fill="#f1e68c" stroke="#333" stroke-width="0.7"/><circle cx="249.6" cy="283.8" r="2.3" fill="#bff0f6" stroke="#333" stroke-width="0.7"/><circle cx="255.7" cy="289.6" r="2.3" fill="#0b5fb8" stroke="#333" stroke-width="0.7"/><circle cx="227.4" cy="295.9" r="2.3" fill="#bff0f6" stroke="#333" stroke-width="0.7"/><circle cx="216.6" cy="299.3" r="2.3" fill="#72aeea" stroke="#333" stroke-width="0.7"/><circle cx="219.0" cy="302.6" r="2.3" fill="#72aeea" stroke="#333" stroke-width="0.7"/><circle cx="273.9" cy="283.8" r="2.3" fill="#72aeea" stroke="#333" stroke-width="0.7"/><circle cx="286.0" cy="285.5" r="2.3" fill="#0b5fb8" stroke="#333" stroke-width="0.7"/><circle cx="274.5" cy="294.1" r="2.3" fill="#72aeea" stroke="#333" stroke-width="0.7"/><circle cx="263.8" cy="300.9" r="2.3" fill="#bff0f6" stroke="#333" stroke-width="0.7"/><circle cx="273.5" cy="304.9" r="2.3" fill="#bff0f6" stroke="#333" stroke-width="0.7"/><circle cx="292.1" cy="304.0" r="2.3" fill="#0b5fb8" stroke="#333" stroke-width="0.7"/><circle cx="298.8" cy="308.0" r="2.3" fill="#72aeea" stroke="#333" stroke-width="0.7"/><circle cx="302.6" cy="314.8" r="2.3" fill="#0b5fb8" stroke="#333" stroke-width="0.7"/><circle cx="286.7" cy="315.4" r="2.3" fill="#bff0f6" stroke="#333" stroke-width="0.7"/><circle cx="296.4" cy="320.2" r="2.3" fill="#72aeea" stroke="#333" stroke-width="0.7"/><circle cx="311.6" cy="322.9" r="2.3" fill="#0b5fb8" stroke="#333" stroke-width="0.7"/><circle cx="215.0" cy="317.1" r="2.3" fill="#0b5fb8" stroke="#333" stroke-width="0.7"/><circle cx="222.0" cy="315.7" r="2.3" fill="#72aeea" stroke="#333" stroke-width="0.7"/><circle cx="226.7" cy="314.4" r="2.3" fill="#72aeea" stroke="#333" stroke-width="0.7"/><circle cx="229.8" cy="317.5" r="2.3" fill="#bff0f6" stroke="#333" stroke-width="0.7"/><circle cx="234.1" cy="314.1" r="2.3" fill="#ffffff" stroke="#333" stroke-width="0.7"/><circle cx="237.1" cy="316.5" r="2.3" fill="#bff0f6" stroke="#333" stroke-width="0.7"/><circle cx="241.5" cy="314.1" r="2.3" fill="#ffffff" stroke="#333" stroke-width="0.7"/><circle cx="244.6" cy="312.1" r="2.3" fill="#ffffff" stroke="#333" stroke-width="0.7"/><circle cx="247.9" cy="311.4" r="2.3" fill="#ffffff" stroke="#333" stroke-width="0.7"/><circle cx="252.3" cy="319.8" r="2.3" fill="#ffffff" stroke="#333" stroke-width="0.7"/><circle cx="198.0" cy="323.5" r="2.3" fill="#0b5fb8" stroke="#333" stroke-width="0.7"/><circle cx="203.4" cy="325.2" r="2.3" fill="#0b5fb8" stroke="#333" stroke-width="0.7"/><circle cx="210.1" cy="327.6" r="2.3" fill="#0b5fb8" stroke="#333" stroke-width="0.7"/><circle cx="212.5" cy="326.0" r="2.3" fill="#0b5fb8" stroke="#333" stroke-width="0.7"/><circle cx="215.9" cy="324.2" r="2.3" fill="#ffffff" stroke="#333" stroke-width="0.7"/><circle cx="220.6" cy="324.6" r="2.3" fill="#bff0f6" stroke="#333" stroke-width="0.7"/><circle cx="225.7" cy="322.9" r="2.3" fill="#0b5fb8" stroke="#333" stroke-width="0.7"/><circle cx="214.5" cy="330.3" r="2.3" fill="#72aeea" stroke="#333" stroke-width="0.7"/><circle cx="221.3" cy="330.3" r="2.3" fill="#f3cc70" stroke="#333" stroke-width="0.7"/><circle cx="201.7" cy="334.1" r="2.3" fill="#bff0f6" stroke="#333" stroke-width="0.7"/><circle cx="207.8" cy="335.7" r="2.3" fill="#bff0f6" stroke="#333" stroke-width="0.7"/><circle cx="209.6" cy="337.7" r="2.3" fill="#0b5fb8" stroke="#333" stroke-width="0.7"/><circle cx="248.7" cy="331.4" r="2.3" fill="#f1e68c" stroke="#333" stroke-width="0.7"/><circle cx="246.9" cy="336.3" r="2.3" fill="#72aeea" stroke="#333" stroke-width="0.7"/><circle cx="243.3" cy="339.4" r="2.3" fill="#0b5fb8" stroke="#333" stroke-width="0.7"/><circle cx="263.5" cy="329.6" r="2.3" fill="#0b5fb8" stroke="#333" stroke-width="0.7"/><circle cx="289.4" cy="336.3" r="2.3" fill="#72aeea" stroke="#333" stroke-width="0.7"/><circle cx="270.5" cy="341.3" r="2.3" fill="#f1e68c" stroke="#333" stroke-width="0.7"/><circle cx="109.3" cy="281.1" r="2.3" fill="#ffffff" stroke="#333" stroke-width="0.7"/><circle cx="112.6" cy="282.0" r="2.3" fill="#f1e68c" stroke="#333" stroke-width="0.7"/><circle cx="137.6" cy="276.3" r="2.3" fill="#f1e68c" stroke="#333" stroke-width="0.7"/><circle cx="158.5" cy="294.1" r="2.3" fill="#0b5fb8" stroke="#333" stroke-width="0.7"/><circle cx="161.2" cy="297.2" r="2.3" fill="#0b5fb8" stroke="#333" stroke-width="0.7"/><circle cx="163.9" cy="295.9" r="2.3" fill="#f1e68c" stroke="#333" stroke-width="0.7"/><circle cx="155.1" cy="304.9" r="2.3" fill="#f1e68c" stroke="#333" stroke-width="0.7"/><circle cx="145.7" cy="307.1" r="2.3" fill="#0b5fb8" stroke="#333" stroke-width="0.7"/><circle cx="142.7" cy="312.8" r="2.3" fill="#0b5fb8" stroke="#333" stroke-width="0.7"/><circle cx="182.3" cy="300.3" r="2.3" fill="#0b5fb8" stroke="#333" stroke-width="0.7"/><circle cx="176.7" cy="318.8" r="2.3" fill="#0b5fb8" stroke="#333" stroke-width="0.7"/><circle cx="174.0" cy="326.0" r="2.3" fill="#72aeea" stroke="#333" stroke-width="0.7"/><circle cx="150.8" cy="330.3" r="2.3" fill="#0b5fb8" stroke="#333" stroke-width="0.7"/><circle cx="169.3" cy="336.8" r="2.3" fill="#bff0f6" stroke="#333" stroke-width="0.7"/><circle cx="166.6" cy="339.4" r="2.3" fill="#bff0f6" stroke="#333" stroke-width="0.7"/><circle cx="159.8" cy="341.3" r="2.3" fill="#ffffff" stroke="#333" stroke-width="0.7"/><circle cx="147.7" cy="343.8" r="2.3" fill="#ffffff" stroke="#333" stroke-width="0.7"/><circle cx="181.4" cy="344.4" r="2.3" fill="#0b5fb8" stroke="#333" stroke-width="0.7"/><circle cx="147.2" cy="344.0" r="2.3" fill="#bff0f6" stroke="#333" stroke-width="0.7"/><circle cx="157.1" cy="345.4" r="2.3" fill="#0b5fb8" stroke="#333" stroke-width="0.7"/><circle cx="162.5" cy="346.5" r="2.3" fill="#bff0f6" stroke="#333" stroke-width="0.7"/><circle cx="149.3" cy="352.4" r="2.3" fill="#ffffff" stroke="#333" stroke-width="0.7"/><circle cx="140.1" cy="357.5" r="2.3" fill="#ffffff" stroke="#333" stroke-width="0.7"/><circle cx="163.8" cy="354.2" r="2.3" fill="#0b5fb8" stroke="#333" stroke-width="0.7"/><circle cx="173.8" cy="356.2" r="2.3" fill="#f1e68c" stroke="#333" stroke-width="0.7"/><circle cx="186.3" cy="347.0" r="2.3" fill="#0b5fb8" stroke="#333" stroke-width="0.7"/><circle cx="193.8" cy="349.2" r="2.3" fill="#f1e68c" stroke="#333" stroke-width="0.7"/><circle cx="197.5" cy="348.1" r="2.3" fill="#0b5fb8" stroke="#333" stroke-width="0.7"/><circle cx="187.3" cy="356.2" r="2.3" fill="#bff0f6" stroke="#333" stroke-width="0.7"/><circle cx="208.3" cy="354.2" r="2.3" fill="#0b5fb8" stroke="#333" stroke-width="0.7"/><circle cx="213.7" cy="355.5" r="2.3" fill="#bff0f6" stroke="#333" stroke-width="0.7"/><circle cx="222.3" cy="355.1" r="2.3" fill="#f3cc70" stroke="#333" stroke-width="0.7"/><circle cx="225.0" cy="360.5" r="2.3" fill="#f3cc70" stroke="#333" stroke-width="0.7"/><circle cx="205.6" cy="361.3" r="2.3" fill="#f1e68c" stroke="#333" stroke-width="0.7"/><circle cx="155.7" cy="365.9" r="2.3" fill="#ffffff" stroke="#333" stroke-width="0.7"/><circle cx="155.7" cy="370.3" r="2.3" fill="#ffffff" stroke="#333" stroke-width="0.7"/><circle cx="179.6" cy="369.0" r="2.3" fill="#72aeea" stroke="#333" stroke-width="0.7"/><circle cx="189.4" cy="369.9" r="2.3" fill="#f3cc70" stroke="#333" stroke-width="0.7"/><circle cx="209.3" cy="370.3" r="2.3" fill="#f3cc70" stroke="#333" stroke-width="0.7"/><circle cx="140.9" cy="377.5" r="2.3" fill="#bff0f6" stroke="#333" stroke-width="0.7"/><circle cx="152.2" cy="377.1" r="2.3" fill="#0b5fb8" stroke="#333" stroke-width="0.7"/><circle cx="164.1" cy="376.1" r="2.3" fill="#f3cc70" stroke="#333" stroke-width="0.7"/><circle cx="170.6" cy="374.0" r="2.3" fill="#f1e68c" stroke="#333" stroke-width="0.7"/><circle cx="173.3" cy="376.1" r="2.3" fill="#ffffff" stroke="#333" stroke-width="0.7"/><circle cx="176.5" cy="373.7" r="2.3" fill="#72aeea" stroke="#333" stroke-width="0.7"/><circle cx="180.3" cy="376.1" r="2.3" fill="#72aeea" stroke="#333" stroke-width="0.7"/><circle cx="185.0" cy="377.8" r="2.3" fill="#bff0f6" stroke="#333" stroke-width="0.7"/><circle cx="149.9" cy="383.8" r="2.3" fill="#ffffff" stroke="#333" stroke-width="0.7"/><circle cx="154.0" cy="383.4" r="2.3" fill="#72aeea" stroke="#333" stroke-width="0.7"/><circle cx="158.4" cy="382.9" r="2.3" fill="#f3cc70" stroke="#333" stroke-width="0.7"/><circle cx="156.7" cy="389.6" r="2.3" fill="#f3cc70" stroke="#333" stroke-width="0.7"/><circle cx="175.6" cy="382.9" r="2.3" fill="#bff0f6" stroke="#333" stroke-width="0.7"/><circle cx="177.6" cy="385.6" r="2.3" fill="#ffffff" stroke="#333" stroke-width="0.7"/><circle cx="179.6" cy="385.6" r="2.3" fill="#f3cc70" stroke="#333" stroke-width="0.7"/><circle cx="217.8" cy="378.0" r="2.3" fill="#f1e68c" stroke="#333" stroke-width="0.7"/><circle cx="216.0" cy="380.4" r="2.3" fill="#f3cc70" stroke="#333" stroke-width="0.7"/><circle cx="242.0" cy="380.4" r="2.3" fill="#0b5fb8" stroke="#333" stroke-width="0.7"/><circle cx="237.6" cy="387.2" r="2.3" fill="#72aeea" stroke="#333" stroke-width="0.7"/><circle cx="221.4" cy="390.6" r="2.3" fill="#f3cc70" stroke="#333" stroke-width="0.7"/><circle cx="234.9" cy="392.9" r="2.3" fill="#f3cc70" stroke="#333" stroke-width="0.7"/><circle cx="136.9" cy="392.9" r="2.3" fill="#72aeea" stroke="#333" stroke-width="0.7"/><circle cx="144.1" cy="397.3" r="2.3" fill="#0b5fb8" stroke="#333" stroke-width="0.7"/><circle cx="139.6" cy="400.0" r="2.3" fill="#0b5fb8" stroke="#333" stroke-width="0.7"/><circle cx="150.3" cy="396.6" r="2.3" fill="#72aeea" stroke="#333" stroke-width="0.7"/><circle cx="160.3" cy="398.2" r="2.3" fill="#ffffff" stroke="#333" stroke-width="0.7"/><circle cx="145.2" cy="404.4" r="2.3" fill="#0b5fb8" stroke="#333" stroke-width="0.7"/><circle cx="165.7" cy="405.8" r="2.3" fill="#72aeea" stroke="#333" stroke-width="0.7"/><circle cx="184.1" cy="407.1" r="2.3" fill="#f3cc70" stroke="#333" stroke-width="0.7"/><circle cx="213.3" cy="398.6" r="2.3" fill="#ffffff" stroke="#333" stroke-width="0.7"/><circle cx="225.4" cy="397.3" r="2.3" fill="#ffffff" stroke="#333" stroke-width="0.7"/><circle cx="244.3" cy="403.4" r="2.3" fill="#f3cc70" stroke="#333" stroke-width="0.7"/><circle cx="216.7" cy="408.1" r="2.3" fill="#f1e68c" stroke="#333" stroke-width="0.7"/><circle cx="306.1" cy="345.7" r="2.3" fill="#ffffff" stroke="#333" stroke-width="0.7"/><circle cx="314.8" cy="348.4" r="2.3" fill="#0b5fb8" stroke="#333" stroke-width="0.7"/><circle cx="316.6" cy="347.4" r="2.3" fill="#72aeea" stroke="#333" stroke-width="0.7"/><circle cx="306.7" cy="352.4" r="2.3" fill="#72aeea" stroke="#333" stroke-width="0.7"/><circle cx="310.8" cy="355.9" r="2.3" fill="#f3cc70" stroke="#333" stroke-width="0.7"/><circle cx="291.9" cy="358.2" r="2.3" fill="#0b5fb8" stroke="#333" stroke-width="0.7"/><circle cx="296.6" cy="360.0" r="2.3" fill="#ffffff" stroke="#333" stroke-width="0.7"/><circle cx="296.0" cy="362.7" r="2.3" fill="#0b5fb8" stroke="#333" stroke-width="0.7"/><circle cx="265.3" cy="363.6" r="2.3" fill="#ffffff" stroke="#333" stroke-width="0.7"/><circle cx="281.1" cy="364.3" r="2.3" fill="#72aeea" stroke="#333" stroke-width="0.7"/><circle cx="298.0" cy="370.7" r="2.3" fill="#72aeea" stroke="#333" stroke-width="0.7"/><circle cx="296.6" cy="373.7" r="2.3" fill="#0b5fb8" stroke="#333" stroke-width="0.7"/><circle cx="302.3" cy="378.4" r="2.3" fill="#f3cc70" stroke="#333" stroke-width="0.7"/><circle cx="308.1" cy="384.5" r="2.3" fill="#f1e68c" stroke="#333" stroke-width="0.7"/><circle cx="311.5" cy="388.8" r="2.3" fill="#0b5fb8" stroke="#333" stroke-width="0.7"/><circle cx="315.5" cy="393.3" r="2.3" fill="#0b5fb8" stroke="#333" stroke-width="0.7"/><circle cx="313.5" cy="398.2" r="2.3" fill="#bff0f6" stroke="#333" stroke-width="0.7"/><circle cx="252.1" cy="402.3" r="2.3" fill="#ffffff" stroke="#333" stroke-width="0.7"/><circle cx="262.7" cy="402.7" r="2.3" fill="#f1e68c" stroke="#333" stroke-width="0.7"/><circle cx="271.7" cy="398.6" r="2.3" fill="#ffffff" stroke="#333" stroke-width="0.7"/><circle cx="274.4" cy="403.6" r="2.3" fill="#f1e68c" stroke="#333" stroke-width="0.7"/><circle cx="277.8" cy="404.4" r="2.3" fill="#ffffff" stroke="#333" stroke-width="0.7"/><circle cx="299.6" cy="407.1" r="2.3" fill="#f1e68c" stroke="#333" stroke-width="0.7"/><circle cx="254.2" cy="408.8" r="2.3" fill="#72aeea" stroke="#333" stroke-width="0.7"/><circle cx="261.6" cy="409.4" r="2.3" fill="#72aeea" stroke="#333" stroke-width="0.7"/><circle cx="155.3" cy="412.8" r="2.3" fill="#f3cc70" stroke="#333" stroke-width="0.7"/><circle cx="164.8" cy="416.5" r="2.3" fill="#ffffff" stroke="#333" stroke-width="0.7"/><circle cx="151.7" cy="419.2" r="2.3" fill="#f3cc70" stroke="#333" stroke-width="0.7"/><circle cx="156.7" cy="422.5" r="2.3" fill="#f1e68c" stroke="#333" stroke-width="0.7"/><circle cx="147.7" cy="422.8" r="2.3" fill="#0b5fb8" stroke="#333" stroke-width="0.7"/><circle cx="142.3" cy="425.5" r="2.3" fill="#0b5fb8" stroke="#333" stroke-width="0.7"/><circle cx="150.3" cy="426.8" r="2.3" fill="#bff0f6" stroke="#333" stroke-width="0.7"/><circle cx="158.7" cy="427.2" r="2.3" fill="#72aeea" stroke="#333" stroke-width="0.7"/><circle cx="161.1" cy="425.5" r="2.3" fill="#ffffff" stroke="#333" stroke-width="0.7"/><circle cx="162.5" cy="430.3" r="2.3" fill="#0b5fb8" stroke="#333" stroke-width="0.7"/><circle cx="156.3" cy="431.7" r="2.3" fill="#72aeea" stroke="#333" stroke-width="0.7"/><circle cx="166.8" cy="425.2" r="2.3" fill="#72aeea" stroke="#333" stroke-width="0.7"/><circle cx="171.9" cy="423.9" r="2.3" fill="#ffffff" stroke="#333" stroke-width="0.7"/><circle cx="176.9" cy="424.5" r="2.3" fill="#f1e68c" stroke="#333" stroke-width="0.7"/><circle cx="180.3" cy="421.4" r="2.3" fill="#f1e68c" stroke="#333" stroke-width="0.7"/><circle cx="184.3" cy="419.2" r="2.3" fill="#f1e68c" stroke="#333" stroke-width="0.7"/><circle cx="188.6" cy="421.9" r="2.3" fill="#f3cc70" stroke="#333" stroke-width="0.7"/><circle cx="191.3" cy="413.4" r="2.3" fill="#f3cc70" stroke="#333" stroke-width="0.7"/><circle cx="198.5" cy="414.4" r="2.3" fill="#ffffff" stroke="#333" stroke-width="0.7"/><circle cx="199.4" cy="417.8" r="2.3" fill="#f1e68c" stroke="#333" stroke-width="0.7"/><circle cx="204.5" cy="415.5" r="2.3" fill="#f3cc70" stroke="#333" stroke-width="0.7"/><circle cx="207.5" cy="412.8" r="2.3" fill="#f1e68c" stroke="#333" stroke-width="0.7"/><circle cx="209.9" cy="414.2" r="2.3" fill="#f3cc70" stroke="#333" stroke-width="0.7"/><circle cx="221.0" cy="410.7" r="2.3" fill="#f3cc70" stroke="#333" stroke-width="0.7"/><circle cx="226.8" cy="410.1" r="2.3" fill="#f1e68c" stroke="#333" stroke-width="0.7"/><circle cx="228.8" cy="413.1" r="2.3" fill="#f3cc70" stroke="#333" stroke-width="0.7"/><circle cx="230.2" cy="410.4" r="2.3" fill="#f3cc70" stroke="#333" stroke-width="0.7"/><circle cx="243.0" cy="414.4" r="2.3" fill="#bff0f6" stroke="#333" stroke-width="0.7"/><circle cx="137.8" cy="434.0" r="2.3" fill="#72aeea" stroke="#333" stroke-width="0.7"/><circle cx="148.6" cy="434.4" r="2.3" fill="#ffffff" stroke="#333" stroke-width="0.7"/><circle cx="130.4" cy="436.7" r="2.3" fill="#0b5fb8" stroke="#333" stroke-width="0.7"/><circle cx="132.4" cy="439.0" r="2.3" fill="#72aeea" stroke="#333" stroke-width="0.7"/><circle cx="127.0" cy="428.6" r="2.3" fill="#ffffff" stroke="#333" stroke-width="0.7"/><circle cx="209.9" cy="428.2" r="2.3" fill="#f3cc70" stroke="#333" stroke-width="0.7"/><circle cx="215.6" cy="428.2" r="2.3" fill="#ffffff" stroke="#333" stroke-width="0.7"/><circle cx="222.7" cy="428.6" r="2.3" fill="#f3cc70" stroke="#333" stroke-width="0.7"/><circle cx="243.0" cy="423.9" r="2.3" fill="#f1e68c" stroke="#333" stroke-width="0.7"/><circle cx="243.0" cy="430.6" r="2.3" fill="#f1e68c" stroke="#333" stroke-width="0.7"/><circle cx="205.6" cy="440.3" r="2.3" fill="#f1e68c" stroke="#333" stroke-width="0.7"/><circle cx="223.2" cy="436.0" r="2.3" fill="#f3cc70" stroke="#333" stroke-width="0.7"/><circle cx="224.5" cy="440.3" r="2.3" fill="#bff0f6" stroke="#333" stroke-width="0.7"/><circle cx="230.2" cy="442.1" r="2.3" fill="#bff0f6" stroke="#333" stroke-width="0.7"/><circle cx="229.1" cy="444.4" r="2.3" fill="#bff0f6" stroke="#333" stroke-width="0.7"/><circle cx="235.3" cy="438.7" r="2.3" fill="#f1e68c" stroke="#333" stroke-width="0.7"/><circle cx="183.2" cy="444.8" r="2.3" fill="#f3cc70" stroke="#333" stroke-width="0.7"/><circle cx="169.8" cy="447.9" r="2.3" fill="#f3cc70" stroke="#333" stroke-width="0.7"/><circle cx="179.6" cy="453.8" r="2.3" fill="#f1e68c" stroke="#333" stroke-width="0.7"/><circle cx="194.8" cy="450.8" r="2.3" fill="#ffffff" stroke="#333" stroke-width="0.7"/><circle cx="212.0" cy="453.3" r="2.3" fill="#f3cc70" stroke="#333" stroke-width="0.7"/><circle cx="218.7" cy="449.2" r="2.3" fill="#f1e68c" stroke="#333" stroke-width="0.7"/><circle cx="228.1" cy="452.2" r="2.3" fill="#ffffff" stroke="#333" stroke-width="0.7"/><circle cx="241.2" cy="453.3" r="2.3" fill="#f3cc70" stroke="#333" stroke-width="0.7"/><circle cx="169.8" cy="456.0" r="2.3" fill="#f1e68c" stroke="#333" stroke-width="0.7"/><circle cx="169.5" cy="459.6" r="2.3" fill="#f1e68c" stroke="#333" stroke-width="0.7"/><circle cx="175.2" cy="460.0" r="2.3" fill="#bff0f6" stroke="#333" stroke-width="0.7"/><circle cx="190.8" cy="464.1" r="2.3" fill="#72aeea" stroke="#333" stroke-width="0.7"/><circle cx="170.6" cy="469.4" r="2.3" fill="#f3cc70" stroke="#333" stroke-width="0.7"/><circle cx="169.5" cy="472.1" r="2.3" fill="#f1e68c" stroke="#333" stroke-width="0.7"/><circle cx="177.6" cy="471.3" r="2.3" fill="#bff0f6" stroke="#333" stroke-width="0.7"/><circle cx="278.9" cy="408.7" r="2.3" fill="#f1e68c" stroke="#333" stroke-width="0.7"/><circle cx="275.5" cy="410.6" r="2.3" fill="#bff0f6" stroke="#333" stroke-width="0.7"/><circle cx="247.5" cy="410.4" r="2.3" fill="#f1e68c" stroke="#333" stroke-width="0.7"/><circle cx="281.8" cy="414.1" r="2.3" fill="#72aeea" stroke="#333" stroke-width="0.7"/><circle cx="291.9" cy="413.0" r="2.3" fill="#f3cc70" stroke="#333" stroke-width="0.7"/><circle cx="298.0" cy="414.8" r="2.3" fill="#f1e68c" stroke="#333" stroke-width="0.7"/><circle cx="284.5" cy="420.2" r="2.3" fill="#f3cc70" stroke="#333" stroke-width="0.7"/><circle cx="251.2" cy="420.8" r="2.3" fill="#f3cc70" stroke="#333" stroke-width="0.7"/><circle cx="247.5" cy="422.5" r="2.3" fill="#0b5fb8" stroke="#333" stroke-width="0.7"/><circle cx="269.1" cy="422.5" r="2.3" fill="#f1e68c" stroke="#333" stroke-width="0.7"/><circle cx="273.2" cy="424.9" r="2.3" fill="#ffffff" stroke="#333" stroke-width="0.7"/><circle cx="271.1" cy="438.2" r="2.3" fill="#f3cc70" stroke="#333" stroke-width="0.7"/><circle cx="316.0" cy="312.0" r="2.3" fill="#0b5fb8" stroke="#333" stroke-width="0.7"/><circle cx="320.7" cy="309.6" r="2.3" fill="#f1e68c" stroke="#333" stroke-width="0.7"/><circle cx="315.2" cy="317.2" r="2.3" fill="#72aeea" stroke="#333" stroke-width="0.7"/><circle cx="324.1" cy="320.4" r="2.3" fill="#72aeea" stroke="#333" stroke-width="0.7"/><circle cx="326.5" cy="325.7" r="2.3" fill="#72aeea" stroke="#333" stroke-width="0.7"/><circle cx="340.3" cy="310.9" r="2.3" fill="#f1e68c" stroke="#333" stroke-width="0.7"/><circle cx="345.6" cy="309.8" r="2.3" fill="#f3cc70" stroke="#333" stroke-width="0.7"/><circle cx="172.9" cy="476.1" r="2.3" fill="#bff0f6" stroke="#333" stroke-width="0.7"/><text x="359" y="224.9" font-size="8.2" fill="#d8d8d8" stroke="#2a2a2a" stroke-width="1.5" stroke-opacity="0.8" paint-order="stroke" text-anchor="middle" style="">Toulouse</text><text x="455" y="235.9" font-size="8.2" fill="#d8d8d8" stroke="#2a2a2a" stroke-width="1.5" stroke-opacity="0.8" paint-order="stroke" text-anchor="middle" style="">Marse</text><text x="430" y="250.9" font-size="8.2" fill="#858585" stroke="#202124" stroke-width="1.5" stroke-opacity="0.8" paint-order="stroke" text-anchor="middle" style="font-style:italic;font-size:7.4px">Gulf of Lion</text><text x="169" y="234.9" font-size="8.2" fill="#808080" stroke="#fff" stroke-width="1.2" stroke-opacity="0.55" paint-order="stroke" text-anchor="middle" style="">Oviedo</text><text x="243.5" y="237.5" font-size="8.2" fill="#a3a8b6" stroke="#0b2a6e" stroke-width="1.5" stroke-opacity="0.8" paint-order="stroke" text-anchor="middle" style="">Bilbao</text><text x="250" y="250.6" font-size="8.2" fill="#808080" stroke="#fff" stroke-width="1.2" stroke-opacity="0.55" paint-order="stroke" text-anchor="middle" style="">Vitoria-</text><text x="251.3" y="258.7" font-size="8.2" fill="#808080" stroke="#fff" stroke-width="1.2" stroke-opacity="0.55" paint-order="stroke" text-anchor="middle" style="">Gasteiz</text><text x="196.7" y="295.4" font-size="8.2" fill="#808080" stroke="#fff" stroke-width="1.2" stroke-opacity="0.55" paint-order="stroke" text-anchor="middle" style="">Valladolid</text><text x="94.4" y="312.29999999999995" font-size="8.2" fill="#d8d8d8" stroke="#2a2a2a" stroke-width="1.5" stroke-opacity="0.8" paint-order="stroke" text-anchor="middle" style="">Porto</text><text x="224.7" y="337.9" font-size="8.2" fill="#808080" stroke="#fff" stroke-width="1.2" stroke-opacity="0.55" paint-order="stroke" text-anchor="middle" style="">Madrid</text><text x="360.3" y="265.09999999999997" font-size="8.2" fill="#808080" stroke="#fff" stroke-width="1.2" stroke-opacity="0.55" paint-order="stroke" text-anchor="middle" style="">Andorra</text><text x="298.1" y="295.4" font-size="8.2" fill="#808080" stroke="#fff" stroke-width="1.2" stroke-opacity="0.55" paint-order="stroke" text-anchor="middle" style="">Zaragoza</text><text x="377.8" y="304.4" font-size="8.2" fill="#8c8c8c" stroke="#fff" stroke-width="1.2" stroke-opacity="0.55" paint-order="stroke" text-anchor="middle" style="">Barcelona</text><text x="389.7" y="362.59999999999997" font-size="8.2" fill="#d8d8d8" stroke="#202124" stroke-width="1.5" stroke-opacity="0.8" paint-order="stroke" text-anchor="middle" style="">Palma de</text><text x="389.7" y="369.79999999999995" font-size="8.2" fill="#d8d8d8" stroke="#202124" stroke-width="1.5" stroke-opacity="0.8" paint-order="stroke" text-anchor="middle" style="">Mallorca</text><text x="400" y="459.5" font-size="8.2" fill="#d8d8d8" stroke="#2a2a2a" stroke-width="1.5" stroke-opacity="0.8" paint-order="stroke" text-anchor="middle" style="">Algiers</text><text x="303.4" y="494.59999999999997" font-size="8.2" fill="#d8d8d8" stroke="#2a2a2a" stroke-width="1.5" stroke-opacity="0.8" paint-order="stroke" text-anchor="middle" style="">Oran</text><text x="81.2" y="395.09999999999997" font-size="8.2" fill="#d8d8d8" stroke="#2a2a2a" stroke-width="1.5" stroke-opacity="0.8" paint-order="stroke" text-anchor="middle" style="">Lisbon</text><text x="164" y="439.5" font-size="8.2" fill="#808080" stroke="#fff" stroke-width="1.2" stroke-opacity="0.55" paint-order="stroke" text-anchor="middle" style="">Seville</text><text x="200.8" y="459.7" font-size="8.2" fill="#808080" stroke="#fff" stroke-width="1.2" stroke-opacity="0.55" paint-order="stroke" text-anchor="middle" style="">Málaga</text><text x="180.6" y="479.0" font-size="8.2" fill="#d8d8d8" stroke="#333" stroke-width="1.5" stroke-opacity="0.8" paint-order="stroke" text-anchor="middle" style="">Gibraltar</text><text x="181.6" y="486.2" font-size="8.2" fill="#d8d8d8" stroke="#202124" stroke-width="1.5" stroke-opacity="0.8" paint-order="stroke" text-anchor="middle" style="">Ceuta</text><text x="168.1" y="491.7" font-size="8.2" fill="#d8d8d8" stroke="#202124" stroke-width="1.5" stroke-opacity="0.8" paint-order="stroke" text-anchor="middle" style="">Tangier</text><text x="242" y="505.4" font-size="8.2" fill="#d8d8d8" stroke="#2a2a2a" stroke-width="1.5" stroke-opacity="0.8" paint-order="stroke" text-anchor="middle" style="">Melilla</text><text x="291" y="419.9" font-size="8.2" fill="#808080" stroke="#fff" stroke-width="1.2" stroke-opacity="0.55" paint-order="stroke" text-anchor="middle" style="">Murcia</text><text x="109.3" y="350.8" font-size="7" fill="#9a9a9a" text-anchor="middle" letter-spacing="1">PORTUGAL</text><rect x="26.2" y="474.8" width="56.8" height="9" fill="#6e6e6e"/><text x="29" y="482.3" font-size="8" fill="#333">200 km</text><rect x="26.2" y="485.1" width="45.3" height="8.8" fill="#6e6e6e"/><text x="29" y="492.5" font-size="8" fill="#333">100 mi</text><rect x="438.5" y="196.7" width="18.2" height="18.6" fill="#fff" stroke="#1d5f8a" stroke-width="0.6"/><g><path d="M443.2,204.3 L447.5,201.8 L451.8,204.3 L447.5,206.8 Z" fill="#fff" stroke="#4a9fd8" stroke-width="1"/><path d="M443.2,206.2 L447.5,208.7 L451.8,206.2 M443.2,208 L447.5,210.5 L451.8,208 M443.2,209.8 L447.5,212.3 L451.8,209.8" fill="none" stroke="#5aa8de" stroke-width="0.8"/></g><rect x="438.2" y="458.1" width="18.4" height="36.6" fill="#fff"/><line x1="438.2" y1="476.3" x2="456.6" y2="476.3" stroke="#ddd" stroke-width="0.6"/><path d="M443.3,466.9 H451.9 M447.6,462.6 V471.2 M443.3,485.1 H451.9" stroke="#8a8a8a" stroke-width="0.9"/><rect x="17" y="503" width="449" height="9" fill="#dedede"/><text x="19.8" y="510.3" font-size="7.2" letter-spacing="-0.32" fill="#555">Esri, HERE, Garmin, USGS | Esri, HERE</text><text x="463" y="510.3" font-size="7.2" letter-spacing="-0.2" fill="#555" text-anchor="end">Powered by Esri</text></svg></div>
<div class="pan" style="left:471px;top:188px;width:123px;height:324px"></div>
<div class="abs" style="left:590px;top:188px;width:4px;height:324px;background:#cfcfcf"></div>
<div class="t" style="left:480px;top:196px;font-size:8px;color:#fff;font-weight:bold">Embalses</div>
<div class="t" style="left:484px;top:214px;font-size:8px;color:#fff;font-weight:normal">Porcentaje reserva hídrica</div>
<div class="t" style="left:484px;top:225px;font-size:8px;color:#fff;font-weight:normal">(%)</div>
<div class="abs" style="left:488.6px;top:242.3px;width:4.4px;height:4.4px;border-radius:50%;background:#0d5fb8"></div>
<div class="t" style="left:497.6px;top:240.9px;font-size:7.4px;color:#fff;font-weight:normal">85 - 100</div>
<div class="abs" style="left:488.6px;top:257.35px;width:4.4px;height:4.4px;border-radius:50%;background:#6aa6e6"></div>
<div class="t" style="left:497.6px;top:255.95000000000002px;font-size:7.4px;color:#fff;font-weight:normal">70 - 85</div>
<div class="abs" style="left:488.6px;top:272.40000000000003px;width:4.4px;height:4.4px;border-radius:50%;background:#bfeef7"></div>
<div class="t" style="left:497.6px;top:271.0px;font-size:7.4px;color:#fff;font-weight:normal">55 - 70</div>
<div class="abs" style="left:488.6px;top:287.45px;width:4.4px;height:4.4px;border-radius:50%;background:#ffffff"></div>
<div class="t" style="left:497.6px;top:286.04999999999995px;font-size:7.4px;color:#fff;font-weight:normal">40 - 55</div>
<div class="abs" style="left:488.6px;top:302.5px;width:4.4px;height:4.4px;border-radius:50%;background:#f5ea8a"></div>
<div class="t" style="left:497.6px;top:301.09999999999997px;font-size:7.4px;color:#fff;font-weight:normal">25 - 40</div>
<div class="abs" style="left:488.6px;top:317.55px;width:4.4px;height:4.4px;border-radius:50%;background:#f5c86a"></div>
<div class="t" style="left:497.6px;top:316.15px;font-size:7.4px;color:#fff;font-weight:normal">&lt;25</div>
<div class="abs" style="left:471px;top:341px;width:119px;height:1px;background:#3a3a3a"></div>
<div class="t" style="left:480px;top:351px;font-size:8px;color:#fff;font-weight:bold">Demarcaciones</div>
<div class="t" style="left:480px;top:361px;font-size:8px;color:#fff;font-weight:bold">hidrográficas</div>
<div class="t" style="left:484px;top:378px;font-size:8px;color:#fff;font-weight:normal">Porcentaje reserva hídrica</div>
<div class="t" style="left:484px;top:389px;font-size:8px;color:#fff;font-weight:normal">(%)</div>
<svg class="abs" style="left:487px;top:402.2px" width="16" height="16"><path d="M1.5 1 L14 8 L14 14 L1.5 14 Z" fill="#0b2a6e" stroke="#e6e6e6" stroke-width="1"/></svg>
<div class="t" style="left:505.2px;top:405.8px;font-size:7.4px;color:#fff;font-weight:normal">85 - 100</div>
<svg class="abs" style="left:487px;top:419.95px" width="16" height="16"><path d="M1.5 1 L14 8 L14 14 L1.5 14 Z" fill="#6b80a8" stroke="#e6e6e6" stroke-width="1"/></svg>
<div class="t" style="left:505.2px;top:423.55px;font-size:7.4px;color:#fff;font-weight:normal">70 - 85</div>
<svg class="abs" style="left:487px;top:437.7px" width="16" height="16"><path d="M1.5 1 L14 8 L14 14 L1.5 14 Z" fill="#d3d8e4" stroke="#e6e6e6" stroke-width="1"/></svg>
<div class="t" style="left:505.2px;top:441.3px;font-size:7.4px;color:#fff;font-weight:normal">55 - 70</div>
<svg class="abs" style="left:487px;top:455.45px" width="16" height="16"><path d="M1.5 1 L14 8 L14 14 L1.5 14 Z" fill="#f4ede8" stroke="#e6e6e6" stroke-width="1"/></svg>
<div class="t" style="left:505.2px;top:459.05px;font-size:7.4px;color:#fff;font-weight:normal">40 - 55</div>
<svg class="abs" style="left:487px;top:473.2px" width="16" height="16"><path d="M1.5 1 L14 8 L14 14 L1.5 14 Z" fill="#fbe5bd" stroke="#e6e6e6" stroke-width="1"/></svg>
<div class="t" style="left:505.2px;top:476.8px;font-size:7.4px;color:#fff;font-weight:normal">25 - 40</div>
<svg class="abs" style="left:487px;top:490.95px" width="16" height="16"><path d="M1.5 1 L14 8 L14 14 L1.5 14 Z" fill="#ecc49a" stroke="#e6e6e6" stroke-width="1"/></svg>
<div class="t" style="left:505.2px;top:494.55px;font-size:7.4px;color:#fff;font-weight:normal">&lt;25</div>
<div class="abs" style="left:2px;top:223px;width:10px;height:114px;background:#fff"></div>
<svg class="abs" style="left:4px;top:276px" width="6" height="8"><path d="M1 0.5 L5 4 L1 7.5 Z" fill="#1565c0"/></svg>
</body></html>
